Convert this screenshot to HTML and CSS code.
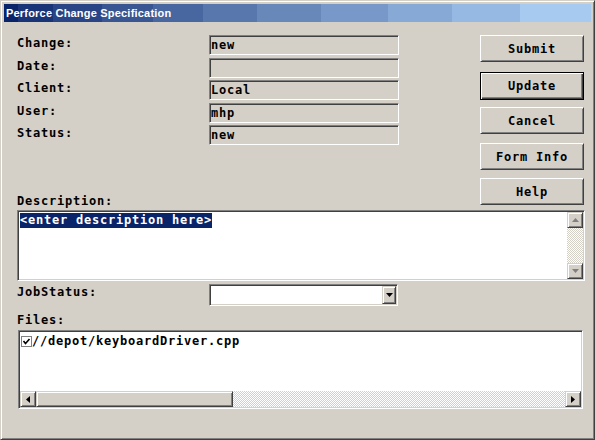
FILE: index.html
```html
<!DOCTYPE html>
<html>
<head>
<meta charset="utf-8">
<link rel="stylesheet" href="styles.css">
</head>
<body>
<div class="window">
  <div class="titlebar"><span class="title">Perforce Change Specification</span></div>
  <div class="content">
    <div class="top">
      <div class="left">
        <div class="form">
          <div class="label">Change:</div><div class="field">new</div>
          <div class="label">Date:</div><div class="field"></div>
          <div class="label">Client:</div><div class="field">Local</div>
          <div class="label">User:</div><div class="field">mhp</div>
          <div class="label">Status:</div><div class="field">new</div>
        </div>
        <div class="label desc-label">Description:</div>
      </div>
      <div class="buttons">
        <button class="btn">Submit</button>
        <button class="btn default">Update</button>
        <button class="btn">Cancel</button>
        <button class="btn">Form Info</button>
        <button class="btn">Help</button>
      </div>
    </div>
    <div class="textarea">
      <div class="textarea-body"><span class="sel">&lt;enter description here&gt;</span></div>
      <div class="vscroll">
        <div class="sbtn"><svg width="7" height="4" viewBox="0 0 7 4"><path d="M3.5 0 L7 4 L0 4 Z" fill="#808080"/></svg></div>
        <div class="track"></div>
        <div class="sbtn"><svg width="7" height="4" viewBox="0 0 7 4"><path d="M0 0 L7 0 L3.5 4 Z" fill="#808080"/></svg></div>
      </div>
    </div>
    <div class="jobrow">
      <div class="label job-label">JobStatus:</div>
      <div class="combo">
        <div class="combo-btn"><svg width="7" height="4" viewBox="0 0 7 4"><path d="M0 0 L7 0 L3.5 4 Z" fill="#000"/></svg></div>
      </div>
    </div>
    <div class="label files-label">Files:</div>
    <div class="list">
      <div class="list-body">
        <div class="item"><span class="check"><svg width="11" height="11" viewBox="0 0 11 11"><rect x="0.5" y="0.5" width="10" height="10" fill="#fff" stroke="#808080"/><path d="M2.5 5 L4.5 7.5 L8.5 3" fill="none" stroke="#000" stroke-width="1.6"/></svg></span>//depot/keyboardDriver.cpp</div>
      </div>
      <div class="hscroll">
        <div class="sbtn"><svg width="4" height="7" viewBox="0 0 4 7"><path d="M4 0 L4 7 L0 3.5 Z" fill="#000"/></svg></div>
        <div class="thumb"></div>
        <div class="track"></div>
        <div class="sbtn"><svg width="4" height="7" viewBox="0 0 4 7"><path d="M0 0 L4 3.5 L0 7 Z" fill="#000"/></svg></div>
      </div>
    </div>
  </div>
</div>
</body>
</html>
```
FILE: styles.css
```css
* { box-sizing: border-box; }
html, body { margin: 0; padding: 0; background: #d4d0c8; }
body {
  font-family: "DejaVu Sans Mono", "Liberation Mono", monospace;
  font-weight: bold;
  font-size: 12px;
  letter-spacing: 0.78px;
  color: #000;
}
.window {
  width: 595px;
  height: 440px;
  background: #d4d0c8;
  border-style: solid;
  border-width: 1px;
  border-color: #d4d0c8 #404040 #404040 #d4d0c8;
  box-shadow: inset 1px 1px #fff, inset -1px -1px #808080;
  padding: 3px;
  display: flex;
  flex-direction: column;
}
.titlebar {
  height: 18px;
  padding-left: 2px;
  background: linear-gradient(to right,
    #0a246a 0 14px, #1a3577 14px 49px, #294585 49px 98px, #395692 98px 149px,
    #4866a0 149px 199px, #5877ad 199px 253px, #6888ba 253px 317px,
    #7798c8 317px 384px, #87a9d5 384px 448px, #96b9e3 448px 516px,
    #a6caf0 516px 587px);
}
.title {
  font-family: "Liberation Sans", Arial, sans-serif;
  font-size: 11px;
  font-weight: bold;
  letter-spacing: 0.2px;
  line-height: 18px;
  color: #fff;
  white-space: nowrap;
}
.content {
  padding: 0 6px 0 13px;
  display: flex;
  flex-direction: column;
}
.top {
  margin-top: 13px;
  display: flex;
}
.left {
  flex: 1;
  display: flex;
  flex-direction: column;
}
.form {
  display: grid;
  grid-template-columns: 192px 190px;
  grid-auto-rows: 20px;
  row-gap: 2.5px;
}
.label {
  line-height: 16px;
  white-space: nowrap;
  align-self: start;
}
.desc-label {
  margin-top: auto;
  line-height: 18px;
}
.field {
  height: 20px;
  line-height: 16px;
  padding: 1px;
  border: 1px solid;
  border-color: #808080 #fff #fff #808080;
  box-shadow: inset 1px 1px #404040, inset -1px -1px #d4d0c8;
  background: #d4d0c8;
  white-space: nowrap;
}
.buttons {
  width: 104px;
  margin-right: 1px;
  padding-bottom: 5px;
  display: flex;
  flex-direction: column;
}
.btn {
  font: inherit;
  letter-spacing: inherit;
  color: #000;
  height: 27px;
  width: 104px;
  padding: 0;
  margin: 0;
  background: #d4d0c8;
  border: 1px solid;
  border-color: #fff #404040 #404040 #fff;
  box-shadow: inset 1px 1px #d4d0c8, inset -1px -1px #808080;
  line-height: 16px;
  text-align: center;
}
.btn.default {
  height: 28px;
  margin-top: 10px;
  border-color: #000;
  box-shadow: inset 1px 1px #fff, inset -1px -1px #404040, inset -2px -2px #808080;
}
.btn:nth-child(3) { margin-top: 7px; }
.btn:nth-child(4) { margin-top: 9px; }
.btn:nth-child(5) { margin-top: 8px; }
.textarea {
  height: 71px;
  border: 1px solid;
  border-color: #808080 #fff #fff #808080;
  box-shadow: inset 1px 1px #404040, inset -1px -1px #d4d0c8;
  background: #fff;
  padding: 1px;
  display: flex;
}
.textarea-body {
  flex: 1;
  padding: 1px 0 0 1px;
  line-height: 15px;
}
.sel {
  display: inline-block;
  background: #0a246a;
  color: #fff;
  line-height: 15px;
}
.vscroll {
  width: 16px;
  display: flex;
  flex-direction: column;
}
.sbtn {
  width: 16px;
  height: 16px;
  flex: none;
  background: #d4d0c8;
  border: 1px solid;
  border-color: #d4d0c8 #404040 #404040 #d4d0c8;
  box-shadow: inset 1px 1px #fff, inset -1px -1px #808080;
  display: flex;
  align-items: center;
  justify-content: center;
}
.sbtn svg { display: block; }
.track {
  flex: 1;
  background-color: #fff;
  background-image: repeating-conic-gradient(#d4d0c8 0 25%, #fff 0 50%);
  background-size: 2px 2px;
}
.jobrow {
  margin-top: 3px;
  display: flex;
  align-items: flex-start;
}
.job-label { width: 192px; }
.combo {
  width: 189px;
  height: 22px;
  border: 1px solid;
  border-color: #808080 #fff #fff #808080;
  box-shadow: inset 1px 1px #404040, inset -1px -1px #d4d0c8;
  background: #fff;
  padding: 1px;
  display: flex;
  justify-content: flex-end;
}
.combo-btn {
  width: 14px;
  height: 18px;
  background: #d4d0c8;
  border: 1px solid;
  border-color: #d4d0c8 #404040 #404040 #d4d0c8;
  box-shadow: inset 1px 1px #fff, inset -1px -1px #808080;
  display: flex;
  align-items: center;
  justify-content: center;
}
.combo-btn svg { display: block; }
.files-label { margin-top: 6px; }
.list {
  margin: 2px 2px 0 1px;
  height: 79px;
  border: 1px solid;
  border-color: #808080 #fff #fff #808080;
  box-shadow: inset 1px 1px #404040, inset -1px -1px #d4d0c8;
  background: #fff;
  padding: 1px;
  display: flex;
  flex-direction: column;
}
.list-body {
  flex: 1;
  padding-top: 1px;
  padding-left: 1px;
}
.item {
  line-height: 16px;
  display: flex;
  align-items: center;
  white-space: nowrap;
}
.check {
  width: 11px;
  height: 11px;
  display: inline-block;
  flex: none;
}
.check svg { display: block; }
.hscroll {
  height: 16px;
  display: flex;
}
.thumb {
  width: 197px;
  height: 16px;
  background: #d4d0c8;
  border: 1px solid;
  border-color: #d4d0c8 #404040 #404040 #d4d0c8;
  box-shadow: inset 1px 1px #fff, inset -1px -1px #808080;
}
```
